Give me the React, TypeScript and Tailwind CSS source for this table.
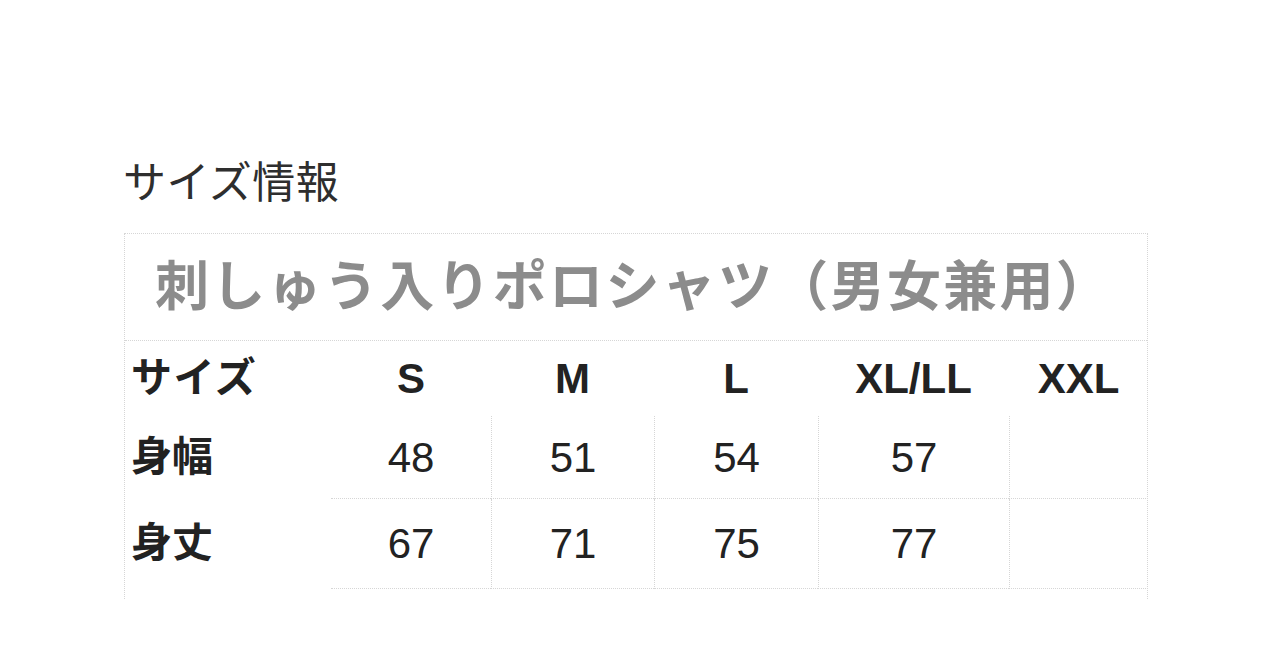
const sizes = ['S', 'M', 'L', 'XL/LL', 'XXL'];

const rows = [
  { label: '身幅', values: ['48', '51', '54', '57', ''] },
  { label: '身丈', values: ['67', '71', '75', '77', ''] },
];

const jp = "font-['Liberation_Sans','Noto_Sans_CJK_JP',sans-serif]";

export default function App() {
  return (
    <div className={`min-h-[667px] w-[1280px] bg-white pt-[158px] pl-[124px] ${jp}`}>
      <h1 className="ml-[-1px] text-[43px] leading-[50px] font-normal tracking-[0.5px] text-[#2e2e2e]">
        サイズ情報
      </h1>

      <div className="mt-[25px] w-[1024px] border-x border-t border-dotted border-[#d6d6d6]">
        <div className="flex h-[107px] items-center border-b border-dotted border-[#d6d6d6] pl-[30px]">
          <span className="text-[54px] font-bold tracking-[2.3px] text-[#8c8c8c]">
            刺しゅう入りポロシャツ（男女兼用）
          </span>
        </div>

        <div className="grid grid-cols-[206px_160px_163px_164px_191px_139px]">
          <div className="flex h-[75px] items-center pl-[6px] text-[41px] font-bold tracking-[1.5px] text-[#222]">
            サイズ
          </div>
          {sizes.map((s) => (
            <div
              key={s}
              className="flex h-[75px] items-center justify-center text-[42px] font-bold text-[#222]"
            >
              {s}
            </div>
          ))}

          {rows.map((row, ri) => (
            <div key={row.label} className="contents">
              <div
                className={`flex items-center pl-[6px] text-[41px] font-bold text-[#222] ${
                  ri === 0 ? 'h-[83px]' : 'h-[90px]'
                }`}
              >
                {row.label}
              </div>
              {row.values.map((v, ci) => (
                <div
                  key={ci}
                  className={`flex items-center justify-center border-b border-dotted border-[#d6d6d6] text-[42px] text-[#222] ${
                    ci > 0 ? 'border-l' : ''
                  } ${ri === 0 ? 'h-[83px]' : 'h-[90px]'}`}
                >
                  {v}
                </div>
              ))}
            </div>
          ))}
        </div>
        <div className="h-[10px]" />
      </div>
    </div>
  );
}
